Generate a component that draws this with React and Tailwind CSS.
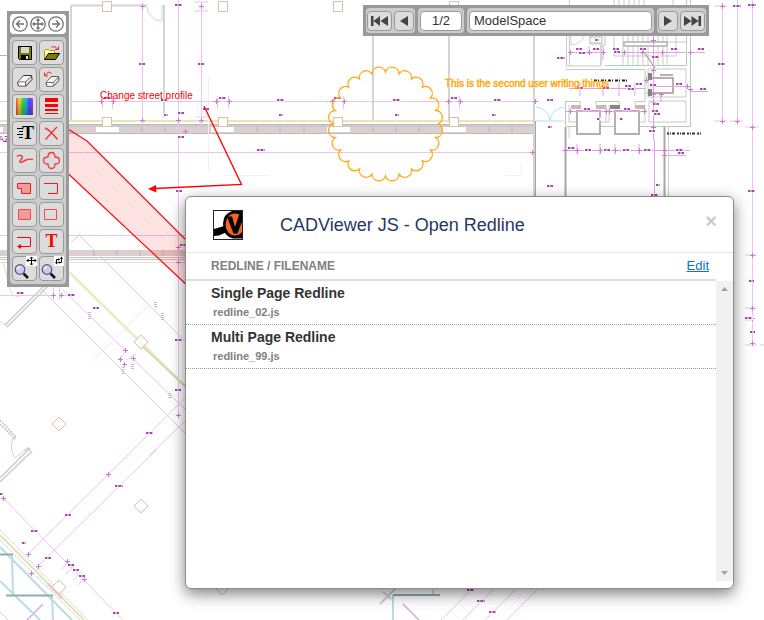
import React from "react";

const PURPLE = "#ebc3ee";
const MARK = "#96109a";
const GREEN = "#b4d0b4";
const CYAN = "#b5e0ea";
const TAN = "#dcbfa8";

/* [x, y, width] of the tiny dimension marks on the plan */
const MARKS = [
  [175, 5, 7], [139, 64, 6], [198, 64, 6], [104, 98, 7], [161, 100, 5], [164, 115, 4], [178, 113, 6], [178, 137, 6],
  [219, 98, 7], [277, 100, 7], [334, 98, 7], [393, 100, 7], [451, 98, 6], [494, 100, 7], [547, 100, 6],
  [279, 115, 4], [395, 115, 4], [492, 115, 4], [548, 127, 4], [547, 186, 6], [257, 150, 8], [203, 109, 6],
  [176, 191, 6], [180, 245, 6], [17, 293, 7], [68, 295, 7], [93, 308, 6], [175, 340, 7], [175, 390, 6], [146, 433, 7],
  [115, 486, 8], [65, 515, 6], [31, 531, 7], [22, 543, 4], [45, 558, 6], [68, 565, 6], [73, 570, 6], [79, 576, 6], [113, 613, 6],
  [0, 494, 3], [557, 58, 8], [576, 49, 6], [579, 53, 6], [593, 49, 6], [613, 49, 6], [614, 52, 6], [640, 49, 6], [652, 57, 7],
  [671, 49, 6], [698, 49, 6], [577, 88, 6], [603, 88, 6], [625, 86, 6], [628, 89, 6], [636, 84, 6], [650, 85, 6],
  [676, 84, 6], [700, 89, 6], [584, 109, 6], [624, 109, 6], [653, 104, 6], [652, 111, 6], [654, 114, 6], [649, 131, 6],
  [568, 148, 7], [585, 150, 6], [604, 150, 6], [623, 150, 6], [644, 150, 7], [676, 150, 7], [678, 153, 6],
  [651, 195, 7], [718, 64, 7], [733, 6, 8], [748, 5, 8], [748, 191, 7], [749, 281, 5], [745, 318, 7], [750, 332, 5],
  [467, 590, 7], [477, 601, 8], [489, 612, 7], [595, 40, 4], [597, 119, 3], [620, 119, 3], [656, 185, 4],
];

/* [x, y] of the arrow ticks where dimension lines end */
const TICKS = [
  [142, 6], [142, 120], [101, 101], [113, 101], [216, 101], [229, 101], [332, 101], [344, 101], [448, 101], [460, 101],
  [535, 101], [532, 152], [178, 120], [185, 131], [201, 6], [201, 120], [53, 295], [61, 295], [178, 247], [178, 262],
  [752, 127], [752, 255], [752, 308], [752, 318], [722, 6], [722, 121], [737, 121], [752, 5], [570, 52], [589, 52], [603, 52],
  [624, 52], [662, 52], [690, 52], [577, 150], [600, 150], [615, 150], [639, 150], [565, 150], [664, 150], [664, 155],
  [653, 40], [653, 70], [653, 94], [661, 94], [653, 102], [653, 127], [690, 89], [570, 111], [606, 111], [609, 111], [644, 111],
  [125, 350], [120, 359], [133, 358], [124, 364], [108, 474], [28, 554], [38, 566], [67, 561], [84, 579], [31, 573], [3, 498],
  [646, 80], [687, 86], [752, 343], [178, 415], [642, 52],
];

const COLUMNS = [107, 223, 338, 454];
const DIAMONDS = [[141, 342], [59, 424], [141, 506], [59, 587], [222, 588]];

function cloudPath(cx, cy, radius, count, bump) {
  let d = "";
  for (let i = 0; i <= count; i++) {
    const a = (i / count) * Math.PI * 2;
    const x = (cx + radius * Math.cos(a)).toFixed(1);
    const y = (cy + radius * Math.sin(a)).toFixed(1);
    d += i === 0 ? `M${x} ${y}` : `A${bump} ${bump} 0 0 1 ${x} ${y}`;
  }
  return d;
}

function Drawing() {
  return (
    <svg className="absolute left-0 top-0" width="764" height="620" viewBox="0 0 764 620" fill="none" aria-hidden="true">
      {/* street band and facade wall */}
      <rect x="0" y="125" width="535" height="8" fill="#dccfcf" />
      <path d="M0 121H535" stroke="#e6e6bb" strokeWidth="2" />
      <path d="M0 124.500H535M0 133.500H535" stroke="#bdbdbd" />
      <path d="M0 126H535" stroke="#c8c0c0" strokeWidth="1" />
      {[142, 165, 257, 280, 304, 373, 396, 419, 489, 512].map((x) => (
        <path key={x} d={`M${x} 127V132`} stroke="#c3b2b2" />
      ))}
      {[96, 211, 327, 443].map((x) => (
        <rect key={x} x={x} y="127" width="23" height="5" fill="#fff" />
      ))}
      <rect x="0" y="127" width="3" height="5" fill="#fff" />
      <g stroke="#d4d4d4" strokeWidth="2">
        <path d="M71 5.500H147M71 5V120M164 5V118M373 5V120M449 5V120M534 5V196" />
      </g>
      <path d="M535.500 121V196" stroke="#a5a5a5" />
      <path d="M0 55.500H8" stroke="#b5b5b5" />
      <path d="M208.500 75V172M223 175.500H270M505 175.500H521V162M521 3V14" stroke="#f1f1f1" />
      <path d="M147 6A15 15 0 0 0 162 21V5M536 107A15 15 0 0 1 550 121A15 15 0 0 1 564 107M536 121H564" stroke={CYAN} />

      {/* lower street */}
      <rect x="0" y="250" width="186" height="6" fill="#dccfcf" />
      <path d="M0 257.500H186M0 259.500H186" stroke="#c4c4c4" />
      <path d="M0 262.500H186" stroke="#eedede" />
      <path d="M94 250V256M117 250V256M140 250V256M163 250V256" stroke="#c3b2b2" />

      {/* dimension lines */}
      <g stroke={PURPLE}>
        <path d="M142.500 3V120M178.500 0V417M201.500 2V125M0 101.500H535M0 152.500H535M0 235.500H186M194 2H208M194 11H208M196 117H208" />
        <path d="M102.500 96V109M112.500 96V109M217.500 96V109M228.500 96V109M333.500 96V109M343.500 96V109M449.500 96V109M459.500 96V109" />
        <path d="M79 235L186 342M42 290L186 434M63 290L127 352M132 358L186 410M128 455L186 397M150 455L186 420M133 450L27 555M156 450L37 567M3 498L123 620" />
        <path d="M71 243L80 234M126 360L136 354M118 360L128 350M62 569L69 562M66 574L74 567M73 580L82 571M78 585L86 577M37 567L48 556M0 612L8 620" />
        <path d="M0 295.500H55M59 295.500H76M53.500 286V300M59.500 286V300" />
        <path d="M722.500 2V121M737.500 0V121M752.500 0V345M714 6H727M714 121H727M730 121H743M745 127H759M745 255H757M745 308H757M745 320H753M745 345H757M760 345H764" />
        <path d="M471 590L441 620M493 590L463 620M515 590L485 620M537 590L507 620" />
      </g>
      <path d="M403 604L419 620M27 620L43 604" stroke="#d9aadf" strokeWidth="1.500" />

      {/* angled wing */}
      <path d="M69 272L186 387" stroke="#e9edc9" strokeWidth="3" />
      <path d="M140 344L186 387" stroke="#dccfa6" strokeWidth="1.500" />
      <path d="M0 530L88 620M0 540L80 620" stroke="#c9c9c9" strokeDasharray="2 1" />
      <path d="M0 535L84 620" stroke="#e4e2b8" strokeWidth="2" />
      <path d="M48 584L62 598" stroke="#e2cfc4" strokeWidth="3" />
      <path d="M7 327L57 277M5 325L50 280M0 482L31 452M0 478L30 448L27 451" stroke="#cbcbcb" strokeWidth="1.500" />
      <path d="M0 420L16 437L13 440M0 424L14 438M25 451L28 448L32 453" stroke="#c3c3c3" strokeWidth="1.500" strokeDasharray="2 1" />
      <path d="M92 362L148 306" stroke="#ededed" />
      <path d="M3 262L10 290Q13 297 19 297L24 292M7 262L14 288M12 262L18 288" stroke="#dcdcdc" />
      <path d="M0 321L7 327M13 438Q9 450 15 458L27 448" stroke={CYAN} />
      <g stroke="#b9dce6" strokeWidth="2">
        <path d="M0 547L72 620M0 581L40 620M12 555L13 595M52 596L53 620M393 595V620M433 590V595" />
      </g>
      <path d="M0 554.500H13M6 595.500H53M393 595H440" stroke="#8eacb2" strokeWidth="2" />
      <path d="M380 604L396 588M383 592L391 599" stroke="#d9cfc6" strokeWidth="2" />
      <g stroke="#bdbdbd" strokeWidth="3" strokeDasharray="1 1">
        <path d="M89.500 312V319M162.500 313V321M155.500 302V307M132.500 364V370M123 367V374M170 393V399" />
      </g>

      {/* stair core */}
      <g stroke={GREEN}>
        <path d="M690.500 0V126.500H566M686.500 0V65.500H605M565.500 126V101.500H580V105M596 105V101.500H619V105M635 105V101.500H645V69.500H566M605 33V45H601V65M645 77H650M645 93H650" />
      </g>
      <g stroke="#c9c9c9">
        <path d="M566.500 33V66H601V45M569.500 0V66M590.500 33V44H601M566 69.500H598M648 69H686V97H648ZM649 101H686V122H649ZM623 36V65M628 36V65M633 36V65M638 36V65M643 36V65M648 36V65M658 36V65M663 36V65M667 36V65M614 36V56H676V36M666 42H686" />
        <path d="M569 105V122M606 105V122M609 105V122M645 105V122M569 122H577M600 122H609M639 122H645" />
        <path d="M614 0V6M619 0V6M624 0V6M629 0V6M634 0V6M639 0V6M644 0V6M673 0V6" />
        <path d="M637 42L655 68" stroke="#8d8d8d" />
      </g>
      <rect x="624" y="42" width="43" height="4" fill="#fff" stroke="#c4bfc0" strokeWidth="2" />
      <path d="M571 36V45Q581 44 584 36" stroke={CYAN} />
      <rect x="590" y="37" width="12" height="6" fill="#fff" stroke="#b9b9b9" />
      <g fill="#fff" stroke="#b9adad" strokeWidth="2">
        <path d="M577 111H600V134H577ZM615 111H639V134H615Z" />
        <path d="M652 78H673V93H652" />
        <path d="M660 75H673" />
      </g>
      <path d="M571 107H581M596 107H606M635 107H645" stroke="#cdb5b5" strokeWidth="4" />
      <path d="M610 107H620M650 73V80M650 89V96" stroke="#8a8184" strokeWidth="4" />
      <path d="M565.500 127V196M664.500 127V196" stroke="#a9a9a9" strokeWidth="2" />
      <path d="M569 127V138M668.500 127V196" stroke="#d2d2d2" />
      <g stroke="#dfa4e2">
        <path d="M570 52.500H606M614 52.500H686M691 52.500H705M562 150.500H690M668 155.500H686M569 88.500H645M650 86.500H687M690 91.500H708M566 111.500H645M653.500 33V140M654.500 140V196M603 46V60M589 46V54M580 82V96M603 82V96M619 82V96M635 82V96M577 144V155M600 144V155M615 144V155M639 144V155M661 94V102" />
      </g>
      <path d="M594 80.500H627" stroke="#222" strokeWidth="2" strokeDasharray="3 1 1 2" />
      <path d="M667 133.500H701" stroke="#333" strokeWidth="2" strokeDasharray="2 1 1 1 3 2" />
      <path d="M641 6H658" stroke="#333" strokeWidth="2" strokeDasharray="2 1" />

      {/* columns */}
      {COLUMNS.map((x) => (
        <g key={x} fill="#fff" stroke={TAN}>
          <rect x={x - 4.5} y="1.500" width="9" height="10" />
          <rect x={x - 4.5} y="117.500" width="9" height="9" />
        </g>
      ))}
      {DIAMONDS.map(([x, y]) => (
        <path key={`${x}-${y}`} d={`M${x} ${y - 7}l7 7l-7 7l-7 -7z`} fill="#fff" fillOpacity="0.7" stroke={TAN} />
      ))}

      {TICKS.map(([x, y], i) => (
        <path key={i} d={`M${x - 2} ${y + 0.5}h5M${x + 0.5} ${y - 2}v5`} stroke="#cf78d3" />
      ))}
      {MARKS.map(([x, y, w], i) => (
        <g key={i}>
          <path d={`M${x - 1} ${y}h${w + 2}`} stroke="#fff" strokeWidth="3" />
          <path d={`M${x} ${y}h${w}`} stroke={MARK} strokeOpacity="0.800" strokeWidth="2" strokeDasharray="2 .6 1 .4" />
        </g>
      ))}
      <text x="-2" y="142" fontSize="9" fill={MARK} fontFamily="Liberation Sans, Arial, sans-serif">AZ</text>

      {/* redline markup */}
      <path d="M60 124L87 141L96 150L186 240L190 244V288L186 284L60 166Z" fill="#ff0000" fillOpacity="0.110" />
      <path d="M60 124L87 141L96 150L190 244M60 166L190 288" stroke="#ff0a0a" strokeWidth="1.200" />
      <path d="M204 106L241.500 184.500L155 188.500" stroke="#ff0000" strokeWidth="1.300" />
      <path d="M148 189L156 185L156.500 192.500Z" fill="#ff0000" />
      <path d={cloudPath(385.5, 124, 52, 24, 6.9)} stroke="#ffa812" strokeWidth="1.300" />
      <text x="100" y="99" fontSize="10" fill="#ff0000" fontFamily="Liberation Sans, Arial, sans-serif">Change street profile</text>
      <text x="445" y="87" fontSize="10" fill="#ffa500" stroke="#ffa500" strokeWidth="0.400" fontFamily="Liberation Sans, Arial, sans-serif">
        This is the second user writing things
      </text>
    </svg>
  );
}

const eraser = (
  <>
    <path d="M5.500 15.500L11.500 8.500H19.500L20 12.500L14 19H6.500Z" fill="#f3e0d6" stroke="#333" />
    <path d="M6.500 14.500L12 9H19L13.500 14.500Z" fill="#fff3e4" />
    <path d="M6 15H13.500L19.500 9M13.500 15V18.500" stroke="#5a5a90" />
    <path d="M6.500 15.500H13V18.500H7Z" fill="#fff" />
  </>
);

const lens = (
  <>
    <path d="M11.500 17.500L16 22" stroke="#111" strokeWidth="2.500" />
    <circle cx="8" cy="13.500" r="4.800" fill="#c9c9f4" stroke="#55557a" strokeWidth="1.200" />
    <path d="M5.500 13Q6 11 8 11" stroke="#fff" strokeWidth="1.500" />
  </>
);

const ICONS = {
  save: (
    <>
      <path d="M6.500 6.500H19.500V19.500H7.500L6.500 18.500Z" fill="#7b7b00" stroke="#000" />
      <path d="M9 7H17V13H9Z" fill="#d6d6d6" />
      <path d="M9 15H17V19H9Z" fill="#000" />
      <path d="M14 16H16V19H14Z" fill="#e6e6e6" />
    </>
  ),
  open: (
    <>
      <path d="M5.500 19V10.500L6.500 9.500H9.500L10.500 10.500H15.500V13" fill="#ffff9c" stroke="#b39a00" />
      <path d="M5.500 19.500L9.500 13.500H20.500L16.500 19.500Z" fill="#7b7b00" stroke="#000" />
      <path d="M12.500 7.500Q15.500 5 18.500 9M16 9.500H19.500V6.500" stroke="#f02020" />
    </>
  ),
  eraser,
  undoErase: (
    <>
      <g transform="translate(2 2) scale(.9)">{eraser}</g>
      <path d="M6.500 8.500Q9.500 3 12.500 6.500M5.500 5.500V9H9" stroke="#f02020" />
    </>
  ),
  colors: (
    <>
      <defs>
        <linearGradient id="spectrum">
          <stop offset="0" stopColor="#ff4a4a" />
          <stop offset=".2" stopColor="#f4e12a" />
          <stop offset=".4" stopColor="#43d743" />
          <stop offset=".6" stopColor="#22b8e8" />
          <stop offset=".8" stopColor="#4b4bff" />
          <stop offset="1" stopColor="#c040f0" />
        </linearGradient>
        <linearGradient id="shade" x1="0" y1="0" x2="0" y2="1">
          <stop offset="0" stopColor="#000" stopOpacity="0" />
          <stop offset="1" stopColor="#000" stopOpacity=".3" />
        </linearGradient>
      </defs>
      <rect x="4" y="4" width="17" height="17" fill="url(#spectrum)" />
      <rect x="4" y="4" width="17" height="17" fill="url(#shade)" />
    </>
  ),
  thickness: <path d="M6 4H19V8H6ZM6 10H19V13H6ZM6 15H19V17H6ZM6 19H19V20H6Z" fill="#ff0000" />,
  textStyle: (
    <>
      <path d="M5 7.500H11M7 10.500H11M5 13.500H11M7 16.500H11" stroke="#000" />
      <text x="10" y="18" fontSize="18" fontWeight="700" fill="#000" fontFamily="Liberation Serif, Times New Roman, serif">T</text>
    </>
  ),
  remove: <path d="M6 7Q11 9 18.500 18.500M18 6Q14 10 6.500 18.500" stroke="#f03535" strokeWidth="1.400" />,
  freehand: <path d="M5 8.500Q6 7 9 7.500Q12 9 9 11.500Q6.500 14 9 14.500Q11 13.500 14 12Q18 10.500 21 11.500" stroke="#f03a3a" strokeWidth="1.400" />,
  cloud: <path d="M9 9Q9 4.500 12.500 4.500Q16 4.500 16 9Q20.500 9 20.500 12.500Q20.500 16 16 16Q16 20.500 12.500 20.500Q9 20.500 9 16Q4.500 16 4.500 12.500Q4.500 9 9 9Z" stroke="#f03a3a" strokeWidth="1.300" />,
  polygon: <path d="M5.500 8.500H18.500V18.500H9.500V13.500H5.500Z" fill="#ee9d9d" stroke="#ff1515" />,
  polyline: <path d="M5 8.500H18.500V18.500H9" stroke="#ff1515" />,
  filledRect: <path d="M6.500 7.500H18.500V17.500H6.500Z" fill="#ee9d9d" stroke="#ff4545" />,
  rect: <path d="M5.500 7.500H17.500V17.500H5.500Z" stroke="#ff4545" />,
  arrow: (
    <>
      <path d="M5 8.500H18.500V17.500H8" stroke="#ff0000" />
      <path d="M5 17.500L9 15V20Z" fill="#ff0000" />
    </>
  ),
  text: (
    <text x="12.500" y="18" textAnchor="middle" fontSize="18" fontWeight="700" fill="#ff0000" fontFamily="Liberation Serif, Times New Roman, serif">T</text>
  ),
  pan: (
    <>
      {lens}
      <rect x="14" y="0" width="11" height="10" fill="#fff" />
      <path d="M19.500 1V9M15 4.500H24M18 2.500L19.500 1L21 2.500M18 7.500L19.500 9L21 7.500M16.500 3L15 4.500L16.500 6M22.500 3L24 4.500L22.500 6" stroke="#000" />
    </>
  ),
  zoomWindow: (
    <>
      {lens}
      <rect x="15" y="0" width="10" height="10" fill="#fff" />
      <path d="M17.500 7V3.500H20M22.500 2V6.500H20" stroke="#000" />
      <path d="M16 6H19L17.500 8.500ZM21 3L22.500 .5L24 3ZM19.500 2V5L21 3.500ZM20.500 5V8L19 6.500Z" fill="#000" />
    </>
  ),
};

const TOOLS = [
  ["save", "Save redline"], ["open", "Open redline"], ["eraser", "Erase"], ["undoErase", "Undo erase"],
  ["colors", "Line colour"], ["thickness", "Line thickness"], ["textStyle", "Text style"], ["remove", "Delete"],
  ["freehand", "Freehand"], ["cloud", "Cloud"], ["polygon", "Filled polygon"], ["polyline", "Polyline"],
  ["filledRect", "Filled rectangle"], ["rect", "Rectangle"], ["arrow", "Arrow"], ["text", "Text"],
  ["pan", "Pan and zoom"], ["zoomWindow", "Zoom window"],
];

const ROUND = [
  ["Back", "M12 8H4.500M8 4.500L4.500 8L8 11.500"],
  ["Move", "M8 3V13M3 8H13M6.500 4.500L8 3L9.500 4.500M6.500 11.500L8 13L9.500 11.500M4.500 6.500L3 8L4.500 9.500M11.500 6.500L13 8L11.500 9.500"],
  ["Forward", "M4 8H11.500M8 4.500L11.500 8L8 11.500"],
];

function Palette() {
  return (
    <aside className="absolute left-[7px] top-[11px] flex w-[62px] flex-col gap-[3px] bg-[#999] p-[3px]" aria-label="Redline tools">
      <div className="flex h-5 items-center justify-between rounded bg-white px-[2px]">
        {ROUND.map(([label, d]) => (
          <button key={label} type="button" aria-label={label} className="h-4 w-4">
            <svg width="16" height="16" viewBox="0 0 16 16" fill="none" stroke="#707070" strokeWidth="1.300">
              <circle cx="8" cy="8" r="7.200" />
              <path d={d} />
            </svg>
          </button>
        ))}
      </div>
      <div className="grid grid-cols-[25px_25px] justify-center gap-[2px] rounded bg-[#ccc] py-[3px]">
        {TOOLS.map(([name, label]) => (
          <button key={name} type="button" aria-label={label} className="h-[25px] w-[25px] rounded border border-[#999] bg-[#dcdcdc]">
            <svg className="-m-px max-w-none" width="25" height="25" viewBox="0 0 25 25" fill="none">
              {ICONS[name]}
            </svg>
          </button>
        ))}
      </div>
    </aside>
  );
}

function NavButton({ label, d, width, className }) {
  return (
    <button type="button" aria-label={label} className={`flex h-5 items-center justify-center rounded border border-[#999] bg-[#dcdcdc] ${className}`}>
      <svg className="shrink-0" width={width} height="12" viewBox={`0 0 ${width} 12`} fill="#444">
        <path d={d} />
      </svg>
    </button>
  );
}

function PageBar() {
  const group = "flex h-[25px] items-center gap-[2px] rounded bg-[#ccc]";
  const field = "h-5 rounded border border-[#999] bg-white text-[13px] text-[#333]";
  return (
    <nav className="absolute left-[363px] top-[5px] flex gap-[3px] bg-[#999] p-[3px]" aria-label="Pages">
      <div className={`${group} px-px`}>
        <NavButton label="First page" className="w-[25px]" width={17} d="M0 1H2.500V11H0ZM9 1V11L2.500 6ZM17 1V11L9.500 6Z" />
        <NavButton label="Previous page" className="w-5" width={8} d="M8 1V11L0 6Z" />
      </div>
      <div className={`${group} px-[2px]`}>
        <input aria-label="Page" defaultValue="1/2" className={`${field} w-[42px] text-center`} />
      </div>
      <div className={`${group} px-[2px]`}>
        <input aria-label="Layout" defaultValue="ModelSpace" className={`${field} w-[183px] px-1`} />
      </div>
      <div className={`${group} px-px`}>
        <NavButton label="Next page" className="w-5" width={8} d="M0 1V11L8 6Z" />
        <NavButton label="Last page" className="w-[25px]" width={17} d="M0 1V11L7.500 6ZM7.500 1V11L14.500 6ZM14.500 1H17V11H14.500Z" />
      </div>
    </nav>
  );
}

function Logo() {
  return (
    <svg width="30" height="30" viewBox="0 0 30 30" aria-hidden="true">
      <rect x="0.500" y="0.500" width="29" height="29" fill="#fff" stroke="#222" />
      <path d="M1 19L11 16L14 22L6 25.500L1 26Z" fill="#000" />
      <path d="M29 1H19Q10 4 10 14Q10 26 20 28.500H29Z" fill="#000" />
      <ellipse cx="22" cy="14.500" rx="9.500" ry="11" fill="#f26522" />
      <path d="M14 6.500H19L22 17L26 5H30V9L24.500 23.500H20.500Z" fill="#000" />
      <path d="M29.500 0V30" stroke="#222" />
    </svg>
  );
}

const FILES = [
  ["Single Page Redline", "redline_02.js"],
  ["Multi Page Redline", "redline_99.js"],
];

function OpenDialog() {
  return (
    <section
      role="dialog"
      aria-labelledby="dialog-title"
      className="absolute bottom-[31px] left-[185px] right-[30px] top-[196px] flex flex-col rounded-md border border-[#8c8c8c] bg-white pb-[7px] shadow-[0_5px_15px_rgba(0,0,0,0.5)]"
    >
      <header className="flex h-14 items-center border-b border-[#e5e5e5] pl-[27px] pr-4">
        <Logo />
        <h1 id="dialog-title" className="ml-[37px] flex-1 text-lg text-[#1f3864]">CADViewer JS - Open Redline</h1>
        <button type="button" aria-label="Close" className="mb-2 text-xl font-bold leading-5 text-[#ccc]">×</button>
      </header>
      <div className="flex flex-1">
        <div className="flex-1">
          <table className="w-full border-collapse text-left">
            <thead>
              <tr className="h-[27px] border-b-2 border-[#ddd]">
                <th className="p-0 pl-[25px] text-xs font-bold text-[#808080]">REDLINE / FILENAME</th>
                <th className="p-0 pr-[7px] text-right text-[13px] font-normal">
                  <a href="#edit" className="text-[#0b6fdc] underline">Edit</a>
                </th>
              </tr>
            </thead>
            <tbody>
              {FILES.map(([title, file]) => (
                <tr key={file} className="h-11 border-b border-dotted border-[#999]">
                  <td colSpan={2} className="p-0 pl-[25px] font-bold">
                    <div className="text-sm leading-5 text-[#333]">{title}</div>
                    <div className="pl-[2px] text-[11px] leading-[18px] text-[#808080]">{file}</div>
                  </td>
                </tr>
              ))}
            </tbody>
          </table>
        </div>
        <div className="mt-7 flex w-[17px] flex-col items-center justify-between bg-[#f1f1f1] py-[6px]" aria-hidden="true">
          <svg width="7" height="4" viewBox="0 0 7 4" fill="#a3a3a3"><path d="M0 4L3.500 0L7 4Z" /></svg>
          <svg width="7" height="4" viewBox="0 0 7 4" fill="#a3a3a3"><path d="M0 0L3.500 4L7 0Z" /></svg>
        </div>
      </div>
    </section>
  );
}

export default function App() {
  return (
    <main className="relative h-screen w-full overflow-hidden bg-white font-['Liberation_Sans',Arial,sans-serif]">
      <Drawing />
      <Palette />
      <PageBar />
      <OpenDialog />
    </main>
  );
}
